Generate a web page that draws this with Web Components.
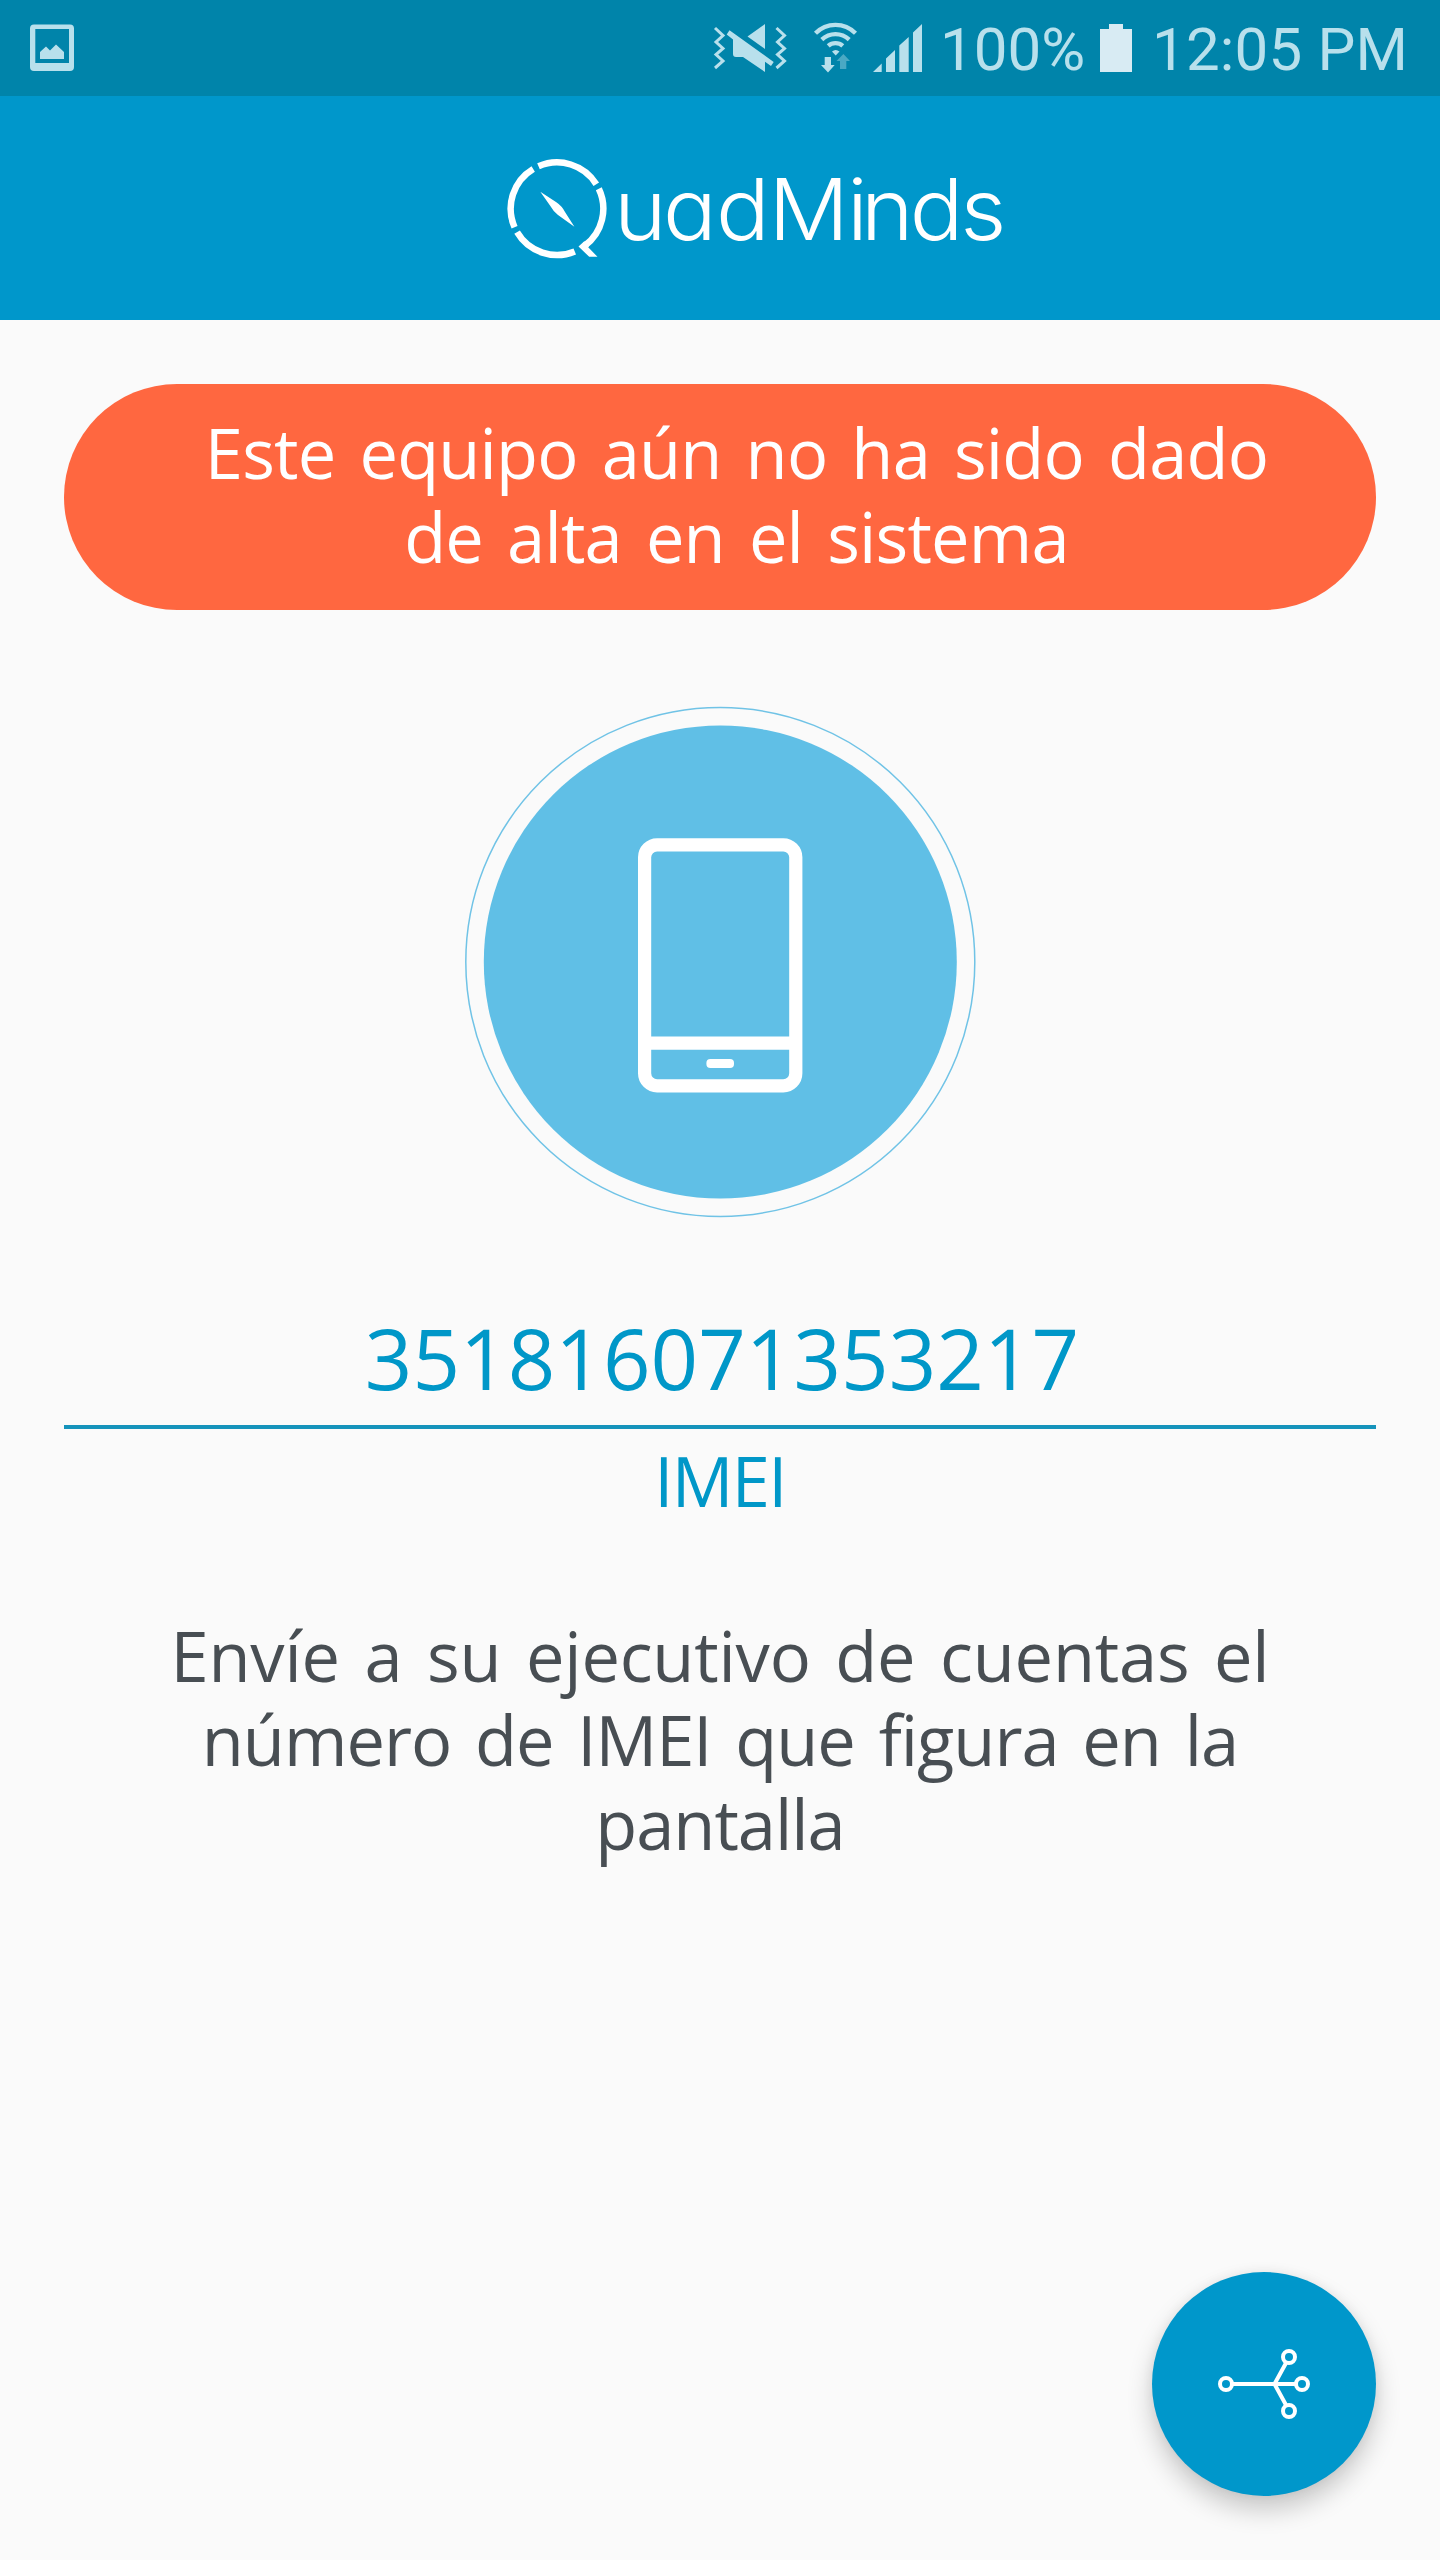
<!DOCTYPE html>
<html lang="es">
<head>
	<meta charset="utf-8">
	<title>QuadMinds</title>
	<style>
		html, body {
			margin: 0;
			background: #fafafa;
		}
		body {
			font-family: "Open Sans", "Noto Sans", sans-serif;
		}
		.wide {
			letter-spacing: -.2px;
		}
	</style>
</head>
<body>
	<imei-screen>
		<status-bar slot="top" battery="100%" time="12:05 PM"></status-bar>
		<app-header slot="top"></app-header>
		<alert-pill>Este equipo aún no ha sido dado<br>de alta en el sistema</alert-pill>
		<device-badge></device-badge>
		<imei-field label="IMEI" value="351816071353217"></imei-field>
		<help-text><span class="wide">Envíe a su ejecutivo de cuentas el</span><br>número de IMEI que figura en la<br>pantalla</help-text>
		<share-button slot="fab"></share-button>
	</imei-screen>

	<script>
	(function() {
		class BaseElement extends HTMLElement {
			constructor() {
				super();
				this.attachShadow({mode: 'open'});
			}

			connectedCallback() {
				this.shadowRoot.innerHTML = this.render();
			}
		}

		class ImeiScreen extends BaseElement {
			render() {
				return `
					<style>
						:host {
							display: flex;
							flex-direction: column;
							width: 1440px;
							height: 2560px;
							overflow: hidden;
							background: #fafafa;
						}
						main {
							flex: 1;
							display: flex;
							flex-direction: column;
							padding: 64px 64px 0;
						}
						footer {
							display: flex;
							justify-content: flex-end;
							padding: 0 64px 64px;
						}
					</style>
					<slot name="top"></slot>
					<main><slot></slot></main>
					<footer><slot name="fab"></slot></footer>
				`;
			}
		}

		class StatusBar extends BaseElement {
			render() {
				return `
					<style>
						:host {
							display: flex;
							align-items: center;
							height: 96px;
							background: #0084aa;
							color: #b8e0ec;
							font: 60px/96px Roboto, sans-serif;
						}
						svg {
							display: block;
							flex: none;
							fill: currentColor;
						}
						.gap { flex: 1; }
						.battery { width: 158px; }
						.battery, .time {
							padding-top: 3px;
							height: 93px;
							line-height: 93px;
							white-space: nowrap;
						}
						.time {
							width: 288px;
							letter-spacing: .2px;
						}
						.cell {
							color: #d8ebf3;
						}
					</style>
					<svg width="96" height="96" viewBox="0 0 96 96">
						<path fill-rule="evenodd" d="M34 24.500H70Q74 24.500 74 28.500V67Q74 71 70 71H34Q30 71 30 67V28.500Q30 24.500 34 24.500ZM35.300 29V63H69V29Z"/>
						<path d="M40 59V52L46 46.500L50 50.500L56 44.500L64 52V59Z"/>
					</svg>
					<span class="gap"></span>
					<svg width="100" height="96" viewBox="700 0 100 96">
						<g fill="none" stroke="currentColor" stroke-width="3">
							<path d="M715 28L723 35.500L716 42L723 48.500L716 54.500L723 61L715 68"/>
							<path d="M776.500 28L784.500 35.500L777.500 42L784.500 48.500L777.500 54.500L784.500 61L776.500 68"/>
						</g>
						<path d="M747.500 36.500L765 24V49Z"/>
						<path d="M729.500 30.300L773.700 62L771 66L765 61.800V72L743 57H736Q733 57 733 54V39.500L726.700 34.500Z"/>
					</svg>
					<svg width="64" height="96" viewBox="800 0 64 96">
						<g fill="none" stroke="currentColor" stroke-width="4.300">
							<path d="M815.500 33.300A28 28 0 0 1 855.500 33.300"/>
							<path d="M821.800 39.600A20 20 0 0 1 849.200 39.600"/>
							<path d="M828.200 45.800A11 11 0 0 1 842.800 45.800"/>
						</g>
						<path d="M832 51.500Q835.500 48.500 839.500 51.500L835.700 55.500Z"/>
						<path d="M824.700 57H831V65H834.700L828 72.500L821 65H824.700Z"/>
						<path opacity=".4" d="M840 69V61H836.500L843.400 54L850 61H846.300V69Z"/>
					</svg>
					<svg width="76" height="96" viewBox="864 0 76 96">
						<path d="M873 72L881.700 63.500V72ZM886 72V58.500L895 50V72ZM899.300 72V45.500L908.700 37V72ZM913 72V32.500L922 24V72Z"/>
					</svg>
					<span class="battery">${this.getAttribute('battery')}</span>
					<svg class="cell" width="54" height="96" viewBox="1098 0 54 96">
						<path d="M1100 29H1109V24H1123V29H1132V72H1100Z"/>
					</svg>
					<span class="time">${this.getAttribute('time')}</span>
				`;
			}
		}

		class AppHeader extends BaseElement {
			render() {
				return `
					<style>
						:host {
							display: flex;
							justify-content: center;
							height: 224px;
							background: #0097cb;
						}
						svg {
							display: block;
							fill: #fff;
						}
						text {
							font-family: Inter, sans-serif;
							font-size: 85px;
							font-weight: 300;
							font-feature-settings: "cv11";
						}
					</style>
					<svg width="540" height="224" viewBox="450 96 540 224" overflow="visible">
						<circle cx="557" cy="208.700" r="46.300" fill="none" stroke="#fff" stroke-width="6.500" pathLength="360"
							stroke-dasharray="78.5 14.5 82 7 82.5 7.5 81.5 6.5" transform="rotate(-25.5 557 208.700)"/>
						<path d="M578.500 246.500L584 241.500L592 241L588.200 247.300L597.500 256.800H589.200Z"/>
						<path d="M540.300 191.700L556 202Q562 206 565 212L574.400 226.700L558 215Q553 211 550 205.500Z"/>
						<text y="240" transform="scale(1.05 1)" x="584.8 631.5 682 732 806.7 820 866.5 914.5">uadMinds</text>
					</svg>
				`;
			}
		}

		class AlertPill extends BaseElement {
			render() {
				return `
					<style>
						:host {
							display: block;
							box-sizing: border-box;
							height: 226px;
							padding: 27px 0 0 33px;
							border-radius: 113px;
							background: #ff6740;
							color: #fff;
							font-size: 68.6px;
							line-height: 84px;
							letter-spacing: -.8px;
							word-spacing: 7px;
							text-align: center;
							white-space: nowrap;
						}
					</style>
					<slot></slot>
				`;
			}
		}

		class DeviceBadge extends BaseElement {
			render() {
				return `
					<style>
						:host {
							display: flex;
							justify-content: center;
							margin-top: 96px;
						}
						svg { display: block; }
					</style>
					<svg width="512" height="512" viewBox="464 706 512 512">
						<circle cx="720.300" cy="962" r="254.500" fill="none" stroke="#70c3e6" stroke-width="1.500"/>
						<circle cx="720.300" cy="962" r="236.500" fill="#60bfe6"/>
						<g fill="none" stroke="#fff" stroke-width="13.200">
							<rect x="644.600" y="844.800" width="151.200" height="241" rx="12.500"/>
							<path d="M645 1043.200H796"/>
						</g>
						<rect x="706.400" y="1059" width="27.600" height="9" rx="4" fill="#fff"/>
					</svg>
				`;
			}
		}

		class ImeiField extends BaseElement {
			render() {
				return `
					<style>
						:host {
							display: block;
							margin-top: 90px;
							color: #0097c8;
							text-align: center;
						}
						.value {
							height: 117px;
							padding-left: 4px;
							border-bottom: 4px solid #1593bb;
							font-size: 83.3px;
							line-height: 100px;
						}
						.label {
							margin-top: 10px;
							font-size: 68.6px;
							line-height: 84px;
							letter-spacing: -1.7px;
						}
					</style>
					<div class="value">${this.getAttribute('value')}</div>
					<div class="label">${this.getAttribute('label')}</div>
				`;
			}
		}

		class HelpText extends BaseElement {
			render() {
				return `
					<style>
						:host {
							display: block;
							margin-top: 91px;
							color: #484e53;
							font-size: 68.6px;
							line-height: 84px;
							letter-spacing: -1px;
							word-spacing: 7px;
							text-align: center;
							white-space: nowrap;
						}
					</style>
					<slot></slot>
				`;
			}
		}

		class ShareButton extends BaseElement {
			render() {
				return `
					<style>
						button {
							display: block;
							width: 224px;
							height: 224px;
							padding: 0;
							border: 0;
							border-radius: 50%;
							background: #0097cb;
							box-shadow: 0 14px 26px rgba(0, 0, 0, .2), 0 0 12px rgba(0, 0, 0, .06);
						}
						svg { display: block; }
					</style>
					<button aria-label="Compartir">
						<svg width="224" height="224" viewBox="0 0 224 224" fill="none" stroke="#fff" stroke-width="4">
							<circle cx="74" cy="112" r="6"/>
							<circle cx="150" cy="112" r="6"/>
							<circle cx="137" cy="85" r="6"/>
							<circle cx="137" cy="139" r="6"/>
							<path d="M80 112H144M134 91L122.500 112L134 133"/>
						</svg>
					</button>
				`;
			}
		}

		window.customElements.define('imei-screen', ImeiScreen);
		window.customElements.define('status-bar', StatusBar);
		window.customElements.define('app-header', AppHeader);
		window.customElements.define('alert-pill', AlertPill);
		window.customElements.define('device-badge', DeviceBadge);
		window.customElements.define('imei-field', ImeiField);
		window.customElements.define('help-text', HelpText);
		window.customElements.define('share-button', ShareButton);
	})();
	</script>
</body>
</html>
